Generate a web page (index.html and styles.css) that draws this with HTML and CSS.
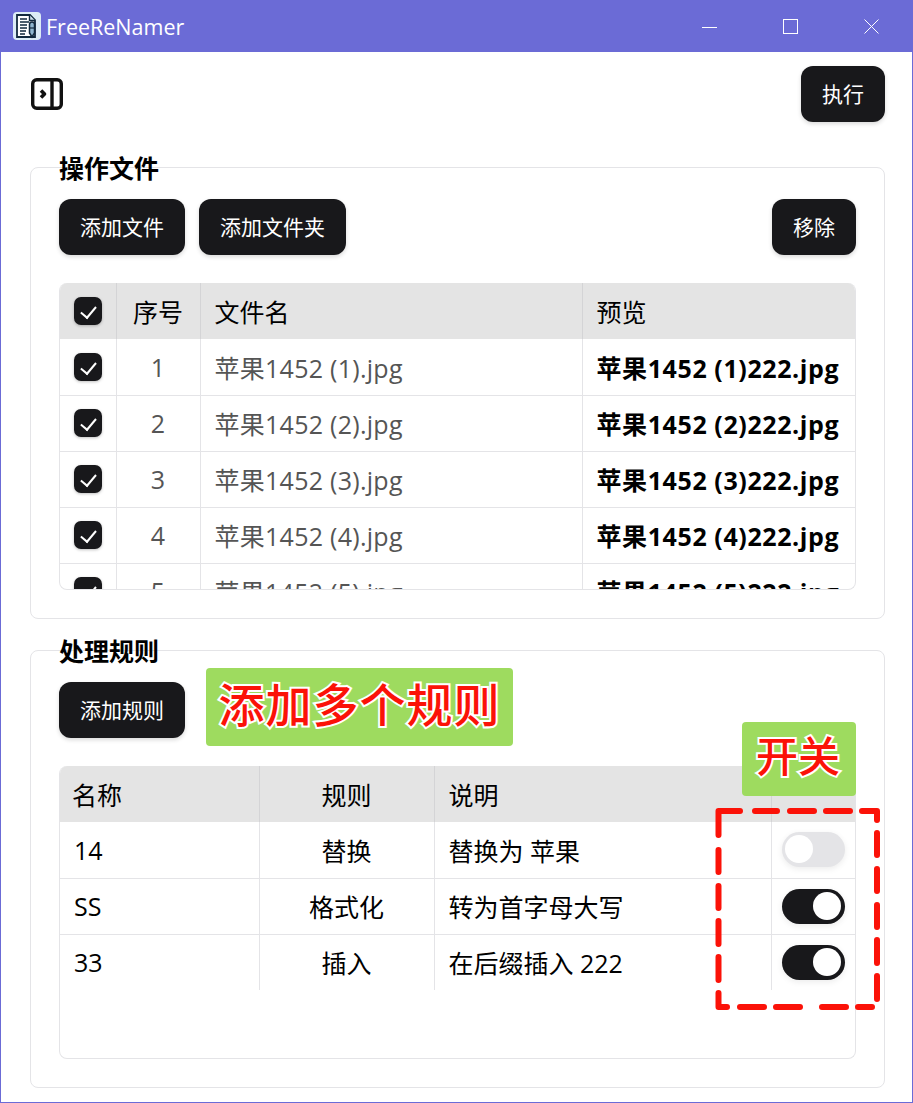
FILE: index.html
```html
<!DOCTYPE html>
<html lang="zh-CN">
<head>
  <meta charset="UTF-8" />
  <title>FreeReNamer</title>
  <link rel="stylesheet" href="styles.css">
</head>
<body>
  <div class="window">
    <div class="titlebar">
      <svg class="app-icon" viewBox="0 0 28 28">
        <rect width="28" height="28" rx="4" fill="#dcecf6"/>
        <path d="M4 3h13l5 5v17H4z" fill="#fff" stroke="#12293d" stroke-width="1.800"/>
        <path d="M16.500 3v5.500H22" fill="#cfe2ee" stroke="#12293d" stroke-width="1.400"/>
        <path d="M7 7h7M7 10h9M7 13h7M7 16h7M7 19h6M7 22h5" stroke="#12293d" stroke-width="1.400"/>
        <path d="M16.500 12.500a2.500 2.500 0 0 1 5 0V21l-2.500 4-2.500-4z" fill="#8fb6cf" stroke="#12293d" stroke-width="1.500"/>
        <path d="M16.500 16h5" stroke="#12293d" stroke-width="1.200"/>
      </svg>
      <span class="app-name">FreeReNamer</span>
      <div class="win-controls">
        <svg viewBox="0 0 15 15"><path d="M0 8.500h15" stroke="#fff"/></svg>
        <svg viewBox="0 0 15 15"><rect x="0.500" y="0.500" width="14" height="14" fill="none" stroke="#fff"/></svg>
        <svg viewBox="0 0 15 15"><path d="M0.500 0.500l14 14M14.500 0.500l-14 14" stroke="#fff"/></svg>
      </div>
    </div>

    <div class="content">
      <div class="toolbar">
        <svg class="sidebar-icon" viewBox="0 0 32 32" fill="none" stroke="#111" stroke-width="3.400" stroke-linejoin="round">
          <rect x="1.700" y="1.700" width="28.600" height="28.600" rx="4"/>
          <path d="M21 1.700v28.600"/>
          <path d="M10 12.500l3.500 3.500-3.500 3.500" stroke-width="3.600"/>
        </svg>
        <button class="btn">执行</button>
      </div>

      <section class="panel panel-files">
        <h2>操作文件</h2>
        <div class="actions">
          <button class="btn">添加文件</button>
          <button class="btn">添加文件夹</button>
          <button class="btn push-right">移除</button>
        </div>
        <div class="table-wrap files-wrap">
          <table class="files">
            <colgroup><col class="c-check"><col class="c-num"><col class="c-name"><col></colgroup>
            <thead>
              <tr><th><span class="check"></span></th><th class="center">序号</th><th>文件名</th><th>预览</th></tr>
            </thead>
            <tbody>
              <tr><td><span class="check"></span></td><td class="center muted">1</td><td class="muted">苹果1452 (1).jpg</td><td class="preview">苹果1452 (1)222.jpg</td></tr>
              <tr><td><span class="check"></span></td><td class="center muted">2</td><td class="muted">苹果1452 (2).jpg</td><td class="preview">苹果1452 (2)222.jpg</td></tr>
              <tr><td><span class="check"></span></td><td class="center muted">3</td><td class="muted">苹果1452 (3).jpg</td><td class="preview">苹果1452 (3)222.jpg</td></tr>
              <tr><td><span class="check"></span></td><td class="center muted">4</td><td class="muted">苹果1452 (4).jpg</td><td class="preview">苹果1452 (4)222.jpg</td></tr>
              <tr><td><span class="check"></span></td><td class="center muted">5</td><td class="muted">苹果1452 (5).jpg</td><td class="preview">苹果1452 (5)222.jpg</td></tr>
            </tbody>
          </table>
        </div>
      </section>

      <section class="panel panel-rules">
        <h2>处理规则</h2>
        <div class="actions">
          <button class="btn">添加规则</button>
        </div>
        <div class="table-wrap rules-wrap">
          <table class="rules">
            <colgroup><col class="c-title"><col class="c-rule"><col class="c-desc"><col></colgroup>
            <thead>
              <tr><th>名称</th><th class="center">规则</th><th>说明</th><th></th></tr>
            </thead>
            <tbody>
              <tr><td>14</td><td class="center">替换</td><td>替换为 苹果</td><td><span class="switch"></span></td></tr>
              <tr><td>SS</td><td class="center">格式化</td><td>转为首字母大写</td><td><span class="switch on"></span></td></tr>
              <tr><td>33</td><td class="center">插入</td><td>在后缀插入 222</td><td><span class="switch on"></span></td></tr>
            </tbody>
          </table>
        </div>
      </section>
    </div>

    <!-- annotations drawn over the screenshot -->
    <div class="note note-add">添加多个规则</div>
    <div class="note note-switch">开关</div>
    <svg class="dash-box" viewBox="714 806 168 208" fill="none" stroke="#fb1208" stroke-width="6" stroke-linecap="round" stroke-linejoin="round">
      <path d="M718.500 835V811H740M755 811h22M790 811h24M826 811h24M862 811h15v9"/>
      <path d="M877 833v22M877 869v22M877 905v22M877 940v23M877 976v23"/>
      <path d="M718.500 850v22M718.500 886v22M718.500 921v23M718.500 957v23M718.500 993v14H727"/>
      <path d="M740 1007h24M776 1007h24M822 1007h24M858 1007h14"/>
    </svg>
  </div>
</body>
</html>
```

FILE: styles.css
```css
* {
  box-sizing: border-box;
}
html, body {
  margin: 0;
  height: 100%;
}
body {
  font-family: "Open Sans", "Noto Sans CJK SC", sans-serif;
  color: #000;
  background: #fff;
}
.window {
  position: relative;
  height: 1103px;
  border: 1px solid #6b6bd6;
  border-top: 0;
  display: flex;
  flex-direction: column;
  overflow: hidden;
}
.titlebar {
  height: 52px;
  flex: none;
  background: #6b6bd6;
  color: #fff;
  display: flex;
  align-items: center;
  padding-left: 12px;
}
.app-icon {
  width: 28px;
  height: 28px;
}
.app-name {
  font-size: 21.500px;
  margin-left: 5px;
}
.win-controls {
  margin-left: auto;
  display: flex;
  gap: 66px;
  padding-right: 33px;
}
.win-controls svg {
  width: 15px;
  height: 15px;
}
.content {
  flex: 1;
  padding: 14px 27px 0 29px;
}
.toolbar {
  display: flex;
  justify-content: space-between;
  align-items: center;
}
.sidebar-icon {
  width: 32px;
  height: 32px;
  margin-left: 1px;
}
.btn {
  height: 56px;
  padding: 0 21px 3px;
  border: 0;
  border-radius: 12px;
  background: #18181b;
  color: #fff;
  font-family: inherit;
  font-size: 21px;
  box-shadow: 0 2px 4px rgba(0, 0, 0, 0.15);
}
.panel {
  border: 1px solid #e4e4e7;
  border-radius: 8px;
  padding: 0 28px;
}
.panel-files {
  height: 452px;
  margin-top: 45px;
}
.panel-rules {
  height: 438px;
  margin-top: 31px;
}
.panel h2 {
  margin: -16px 0 0;
  height: 32px;
  font-size: 25px;
  line-height: 32px;
  font-weight: 700;
}
.actions {
  display: flex;
  gap: 14px;
  margin-top: 15px;
}
.push-right {
  margin-left: auto;
}
.table-wrap {
  margin-top: 28px;
  border: 1px solid #e4e4e7;
  border-top: 0;
  border-radius: 8px;
  overflow: hidden;
}
.files-wrap {
  height: 307px;
}
.rules-wrap {
  height: 293px;
}
table {
  width: 100%;
  table-layout: fixed;
  border-collapse: collapse;
  font-size: 25px;
}
th, td {
  height: 56px;
  padding: 0 14px;
  text-align: left;
  font-weight: 400;
  white-space: nowrap;
  border-left: 1px solid #e4e4e7;
  border-bottom: 1px solid #e4e4e7;
}
th {
  background: #e4e4e4;
  border-bottom: 0;
  border-left-color: #d4d4d6;
}
th:first-child, td:first-child {
  border-left: 0;
}
.rules th:first-child {
  padding-left: 12px;
}
.c-check { width: 56px; }
.c-num { width: 84px; }
.c-name { width: 382px; }
.c-title { width: 199px; }
.c-rule { width: 175px; }
.c-desc { width: 337px; }
.center {
  text-align: center;
}
.muted {
  color: #555;
  letter-spacing: 0.270px;
}
.preview {
  font-weight: 700;
  letter-spacing: 0.600px;
}
.rules tbody tr:last-child td {
  border-bottom: 0;
}
.check {
  display: block;
  position: relative;
  width: 28px;
  height: 28px;
  border-radius: 7px;
  background: #18181b;
  box-shadow: 0 1px 3px rgba(0, 0, 0, 0.25);
}
.check::after {
  content: "";
  position: absolute;
  left: 10px;
  top: 6px;
  width: 7px;
  height: 13px;
  border-right: 2px solid #fff;
  border-bottom: 2px solid #fff;
  transform: rotate(40deg);
}
.rules td:last-child {
  padding: 0 10px;
}
.switch {
  display: block;
  position: relative;
  width: 63px;
  height: 35px;
  border-radius: 18px;
  background: #e4e4e7;
  box-shadow: 0 2px 6px rgba(0, 0, 0, 0.08);
}
.switch::after {
  content: "";
  position: absolute;
  left: 3px;
  top: 3px;
  width: 28px;
  height: 28px;
  border-radius: 50%;
  background: #fff;
}
.switch.on {
  background: #18181b;
}
.switch.on::after {
  left: 31px;
}
.note {
  position: absolute;
  display: flex;
  align-items: center;
  justify-content: center;
  background: #9edb5f;
  border-radius: 4px;
  color: #fb1208;
  font-weight: 500;
  -webkit-text-stroke: 4px #fff;
  paint-order: stroke fill;
}
.note-add {
  left: 205px;
  top: 668px;
  width: 307px;
  height: 78px;
  padding-bottom: 10px;
  font-size: 46px;
  letter-spacing: 1px;
}
.note-switch {
  left: 741px;
  top: 722px;
  width: 114px;
  height: 74px;
  padding: 0 2px 12px 0;
  font-size: 42px;
}
.dash-box {
  position: absolute;
  left: 713px;
  top: 806px;
  width: 168px;
  height: 208px;
}
```
